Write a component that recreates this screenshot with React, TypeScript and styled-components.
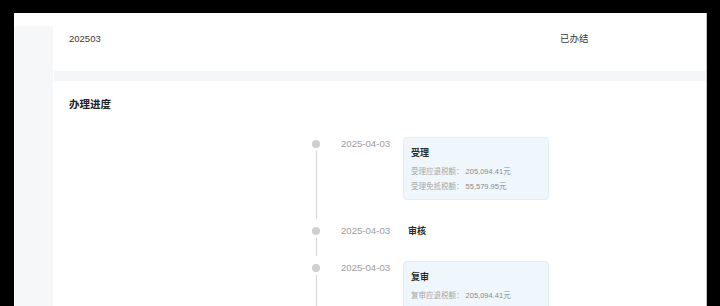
import React from "react";
import styled, { createGlobalStyle } from "styled-components";

const GlobalStyle = createGlobalStyle`
  html, body {
    margin: 0;
    padding: 0;
    background: #000;
    overflow: hidden;
  }
  body {
    font-family: "Liberation Sans", "Noto Sans CJK SC", sans-serif;
  }
`;

const Frame = styled.div`
  display: flex;
  margin: 13px 13px 0 14px;
  height: 293px;
  background: #fff;
  border-right: 1px solid #c4c4c4;
  overflow: hidden;
`;

const Sidebar = styled.div`
  width: 38px;
  margin: 13px 0 0 1px;
  background: #f6f7f9;
  flex-shrink: 0;
`;

const Main = styled.div`
  flex: 1;
  display: flex;
  flex-direction: column;
  min-width: 0;
`;

const InfoCard = styled.div`
  display: flex;
  flex-shrink: 0;
  height: 58px;
  box-sizing: border-box;
  padding: 20px 16px 0;
  font-size: 9.5px;
  line-height: 12px;
  color: #3a3a3a;
`;

const InfoCell = styled.div<{ $w?: number }>`
  width: ${(p) => (p.$w ? `${p.$w}px` : "auto")};
  flex-shrink: 0;
`;

const Divider = styled.div`
  flex-shrink: 0;
  height: 10px;
  background: #f5f6f8;
  margin-left: 1px;
`;

const ProgressCard = styled.div`
  flex-shrink: 0;
  padding: 16px 16px 0;
`;

const Heading = styled.div`
  font-size: 10.5px;
  line-height: 14px;
  font-weight: 700;
  color: #222;
`;

const Timeline = styled.div`
  margin: 26px 0 0 243px;
  display: flex;
  flex-direction: column;
`;

const Item = styled.div`
  display: flex;
  align-items: stretch;
`;

const Rail = styled.div`
  width: 8px;
  display: flex;
  flex-direction: column;
  align-items: center;
  flex-shrink: 0;
`;

const Dot = styled.div`
  width: 8px;
  height: 8px;
  border-radius: 50%;
  background: #cfcfcf;
  margin-top: 3px;
`;

const Line = styled.div`
  flex: 1;
  width: 1px;
  background: #d4d4d4;
  margin: 3px 0 5px;
`;

const Date = styled.div`
  margin-left: 21px;
  width: 62px;
  flex-shrink: 0;
  font-size: 9.6px;
  line-height: 14px;
  color: #9c9c9c;
`;

const Body = styled.div<{ $gap: number }>`
  padding-bottom: ${(p) => p.$gap}px;
`;

const Box = styled.div<{ $plain?: boolean }>`
  width: 146px;
  box-sizing: border-box;
  padding: ${(p) => (p.$plain ? "0 4px" : "8px 7px 5px")};
  background: ${(p) => (p.$plain ? "transparent" : "#eff7fd")};
  border: 1px solid ${(p) => (p.$plain ? "transparent" : "#e1edf6")};
  border-radius: 4px;
  margin-top: ${(p) => (p.$plain ? "-1px" : "0")};
`;

const Title = styled.div`
  font-size: 9px;
  line-height: 14px;
  font-weight: 700;
  color: #2a2a2a;
`;

const Lines = styled.div`
  margin-top: 4px;
`;

const Row = styled.div`
  font-size: 7.5px;
  line-height: 15px;
  color: #a8a8a8;
  white-space: nowrap;
`;

const Value = styled.span`
  color: #8a8a8a;
`;

type Step = {
  date: string;
  title: string;
  rows?: [string, string][];
};

const steps: Step[] = [
  {
    date: "2025-04-03",
    title: "受理",
    rows: [
      ["受理应退税额：", "205,094.41元"],
      ["受理免抵税额：", "55,579.95元"],
    ],
  },
  { date: "2025-04-03", title: "审核" },
  {
    date: "2025-04-03",
    title: "复审",
    rows: [
      ["复审应退税额：", "205,094.41元"],
      ["复审免抵税额：", "55,579.95元"],
    ],
  },
];

export default function App() {
  return (
    <>
      <GlobalStyle />
      <Frame>
        <Sidebar />
        <Main>
          <InfoCard>
            <InfoCell $w={491}>202503</InfoCell>
            <InfoCell>已办结</InfoCell>
          </InfoCard>
          <Divider />
          <ProgressCard>
            <Heading>办理进度</Heading>
            <Timeline>
              {steps.map((s, i) => (
                <Item key={i}>
                  <Rail>
                    <Dot />
                    <Line />
                  </Rail>
                  <Date>{s.date}</Date>
                  <Body $gap={s.rows ? 24 : 22}>
                    <Box $plain={!s.rows}>
                      <Title>{s.title}</Title>
                      {s.rows && (
                        <Lines>
                          {s.rows.map(([label, val]) => (
                            <Row key={label}>
                              {label} <Value>{val}</Value>
                            </Row>
                          ))}
                        </Lines>
                      )}
                    </Box>
                  </Body>
                </Item>
              ))}
            </Timeline>
          </ProgressCard>
        </Main>
      </Frame>
    </>
  );
}
